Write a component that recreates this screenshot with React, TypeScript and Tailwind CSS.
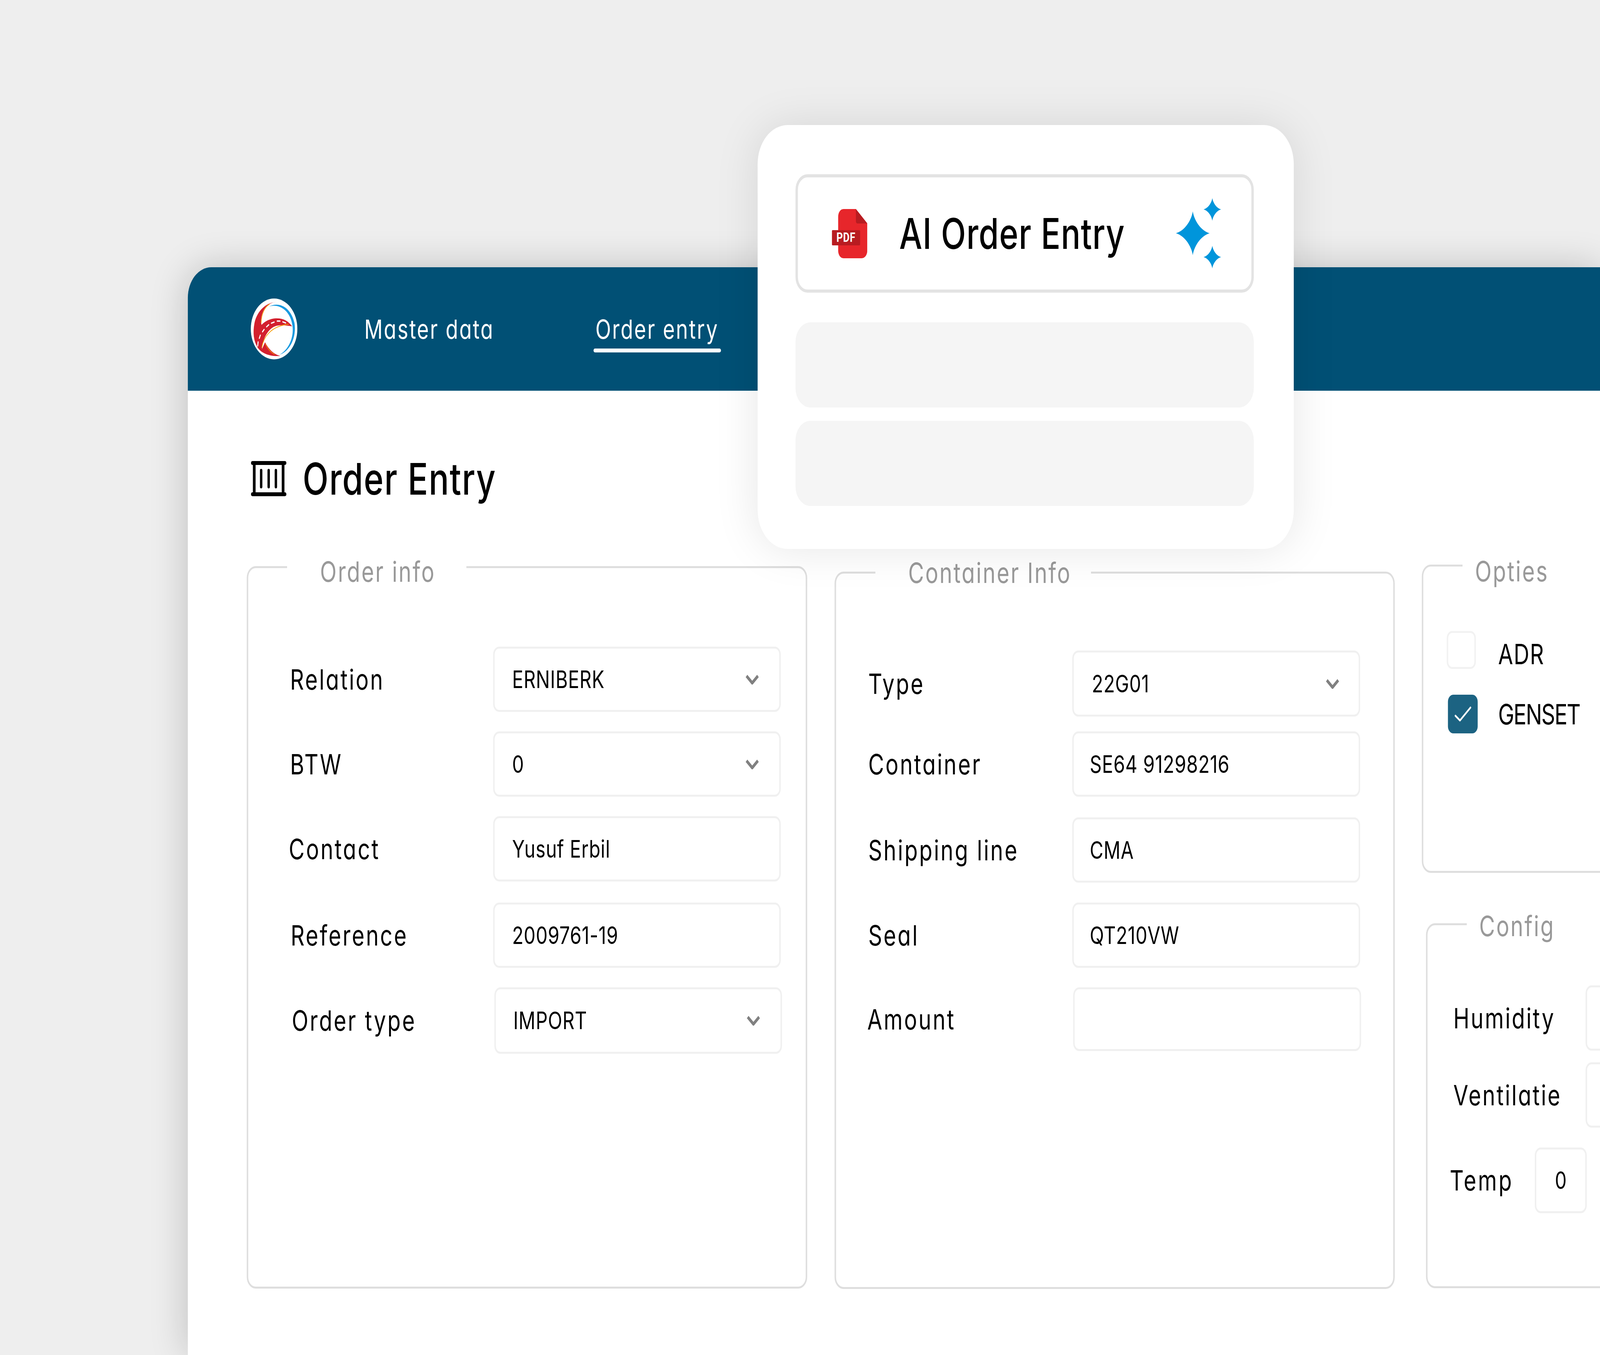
const font = "font-['Inter','Liberation_Sans',sans-serif] [font-feature-settings:'cv11']";

function Chevron() {
  return (
    <svg width="46" height="26" viewBox="0 0 46 26" fill="none" className="shrink-0">
      <path d="M4 4 L23 22 L42 4" stroke="#808080" strokeWidth="8" strokeLinejoin="round" />
    </svg>
  );
}

function Logo() {
  return (
    <svg width="156" height="156" viewBox="103 103 464 467" className="shrink-0">
      <ellipse cx="335" cy="336" rx="232" ry="233" fill="#ffffff" />
      <path
        d="M285 165 C380 125 500 165 538 290 C562 400 490 510 390 533 C480 495 535 400 518 310 C495 190 380 140 285 165 Z"
        fill="#1a9ae0"
      />
      <path
        d="M362 128 C260 135 170 190 140 290 C120 370 135 430 165 470 C200 525 300 550 397 543 C330 530 280 490 245 438 L215 490 C220 420 270 330 360 312 C410 303 470 310 515 316 C470 270 420 252 350 255 C300 257 245 275 210 305 C195 250 225 170 290 145 C315 135 340 130 362 128 Z"
        fill="#d3202e"
      />
      <path d="M206 290 C208 220 240 170 290 146" stroke="#f59a00" strokeWidth="6" fill="none" />
      <path d="M212 480 C228 400 300 315 480 300" stroke="#f59a00" strokeWidth="6" fill="none" />
      <path d="M248 450 C270 490 300 515 340 532" stroke="#f59a00" strokeWidth="5" fill="none" />
      <path
        d="M172 466 L176 436 M188 408 L198 384 M220 358 L236 340 M260 320 L282 304 M308 292 L336 284 M366 276 L394 276 M422 282 L450 290"
        stroke="#ffffff"
        strokeWidth="10"
        strokeLinecap="round"
      />
    </svg>
  );
}

function ContainerIcon() {
  return (
    <svg width="118" height="90" viewBox="0 0 118 90" fill="none" className="shrink-0">
      <path d="M5 5 H113 M5 85 H113" stroke="#000" strokeWidth="10" strokeLinecap="round" />
      <path d="M11 5 V85 M107 5 V85" stroke="#000" strokeWidth="9" />
      <path d="M34 24 V66 M59 24 V66 M83 24 V66" stroke="#000" strokeWidth="8" strokeLinecap="round" />
    </svg>
  );
}

function PdfIcon() {
  return (
    <svg width="118" height="126" viewBox="0 0 118 126" className="shrink-0">
      <path d="M39 0 H80 L118 37 V106 C118 117 110 126 99 126 H39 C28 126 21 117 21 106 V20 C21 9 28 0 39 0 Z" fill="#e7262b" />
      <path d="M80 0 L118 37 H86 C82 37 80 35 80 31 Z" fill="#b81c21" />
      <rect x="0" y="54" width="94" height="39" rx="3" fill="#b81c21" />
      <text x="47" y="84" textAnchor="middle" fill="#ffffff" fontSize="33" fontWeight="700" fontFamily="Roboto, sans-serif" letterSpacing="1">
        PDF
      </text>
    </svg>
  );
}

function Sparkles() {
  const star = (x: number, y: number, r: number) => {
    const a = r * 0.1;
    const b = r * 0.53;
    return `M${x} ${y - r} C${x + a} ${y - b} ${x + b} ${y - a} ${x + r} ${y} C${x + b} ${y + a} ${x + a} ${y + b} ${x} ${y + r} C${x - a} ${y + b} ${x - b} ${y + a} ${x - r} ${y} C${x - b} ${y - a} ${x - a} ${y - b} ${x} ${y - r} Z`;
  };
  return (
    <svg width="155" height="185" viewBox="0 0 155 185" fill="#0095db" className="shrink-0">
      <path d={star(59, 92, 56)} />
      <path d={star(124, 31, 29)} />
      <path d={star(124, 153, 29)} />
    </svg>
  );
}

type FieldProps = {
  label: string;
  value?: string;
  select?: boolean;
  row: string;
  labelClass: string;
  boxClass: string;
};

function Field({ label, value, select, row, labelClass, boxClass }: FieldProps) {
  return (
    <div className={`flex items-center ${row}`}>
      <span className={`shrink-0 text-[72px] leading-none tracking-[4.8px] text-black ${labelClass}`}>{label}</span>
      <div className={`flex items-center justify-between rounded-[20px] border-[5px] border-[#f0f0f0] bg-white ${boxClass}`}>
        <span className="text-[62px] leading-none tracking-[1px] text-black">{value}</span>
        {select && <Chevron />}
      </div>
    </div>
  );
}

function Legend({ text, className, textClass }: { text: string; className: string; textClass: string }) {
  return (
    <legend className={`h-[6px] ${className}`}>
      <span className={`block text-[72px] leading-[92px] tracking-[4.2px] whitespace-nowrap text-[#999999] ${textClass}`}>{text}</span>
    </legend>
  );
}

const orderRows = [
  { label: "Relation", value: "ERNIBERK", select: true, row: "mt-[201px]", labelClass: "w-[676px]", boxClass: "h-[167px] w-[957px] pl-[58px] pr-[67px]" },
  { label: "BTW", value: "0", select: true, row: "mt-[50px]", labelClass: "w-[676px]", boxClass: "h-[167px] w-[957px] pl-[58px] pr-[67px]" },
  { label: "Contact", value: "Yusuf Erbil", row: "mt-[50px]", labelClass: "-ml-[4px] w-[680px]", boxClass: "h-[167px] w-[957px] pl-[58px] pr-[67px]" },
  { label: "Reference", value: "2009761-19", row: "mt-[54px]", labelClass: "ml-[2px] w-[674px]", boxClass: "h-[167px] w-[957px] pl-[58px] pr-[67px]" },
  { label: "Order type", value: "IMPORT", select: true, row: "mt-[50px]", labelClass: "ml-[6px] w-[674px]", boxClass: "h-[170px] w-[957px] pl-[58px] pr-[67px]" },
];

const containerRows = [
  { label: "Type", value: "22G01", select: true, row: "mt-[197px]", labelClass: "w-[679px]", boxClass: "h-[169px] w-[958px] pl-[60px] pr-[64px]" },
  { label: "Container", value: "SE64 91298216", row: "mt-[38px]", labelClass: "w-[679px]", boxClass: "h-[167px] w-[958px] pl-[53px] pr-[64px]" },
  { label: "Shipping line", value: "CMA", row: "mt-[53px]", labelClass: "w-[679px]", boxClass: "h-[167px] w-[958px] pl-[53px] pr-[64px]" },
  { label: "Seal", value: "QT210VW", row: "mt-[51px]", labelClass: "w-[679px]", boxClass: "h-[167px] w-[958px] pl-[53px] pr-[64px]" },
  { label: "Amount", row: "mt-[50px]", labelClass: "-ml-[3px] w-[685px]", boxClass: "h-[163px] w-[958px] pl-[53px] pr-[64px]" },
];

export default function App() {
  // the page is drawn at 5324x3468 and fitted to whatever window it really gets
  const sx = window.innerWidth / 5324;
  const sy = window.innerHeight / 3468;

  return (
    <div className="h-screen w-screen overflow-hidden bg-[#eeeeee]">
      <div
        className={`relative h-[3468px] w-[5324px] origin-top-left overflow-hidden bg-[#eeeeee] pt-[684px] pl-[625px] ${font}`}
        style={{ transform: `scale(${sx}, ${sy})` }}
      >
        {/* main window runs off the right and bottom edge */}
        <div className="h-[2784px] w-[4699px] rounded-tl-[78px] bg-white shadow-[0_0_110px_rgba(0,0,0,0.2)]">
          <header className="flex h-[316px] items-center rounded-tl-[78px] bg-[#015075] pl-[209px]">
            <Logo />
            <nav className="ml-[222px] flex items-center gap-[337px] text-[68px] leading-none tracking-[3.7px] text-white">
              <span className="whitespace-nowrap">Master data</span>
              <span className="relative whitespace-nowrap">
                Order entry
                <span className="absolute -right-[8px] -bottom-[26px] -left-[6px] h-[10px] rounded-full bg-white" />
              </span>
            </nav>
          </header>

          <div className="pl-[196px]">
            <div className="flex items-center pt-[180px] pl-[14px]">
              <ContainerIcon />
              <h1 className="ml-[54px] text-[112px] leading-[90px] font-medium tracking-[2.4px] text-black">Order Entry</h1>
            </div>

            <div className="mt-[174px] flex items-start">
              <fieldset className="mt-[4px] h-[1850px] w-[1865px] shrink-0 rounded-[30px] border-[5px] border-[#dedede] pl-[139px]">
                <Legend text="Order info" className="-ml-[10px] w-[597px] pl-[110px]" textClass="-mt-[31px]" />
                {orderRows.map((r) => (
                  <Field key={r.label} {...r} />
                ))}
              </fieldset>

              <fieldset className="mt-[18px] ml-[91px] h-[1837px] w-[1864px] shrink-0 rounded-[30px] border-[5px] border-[#dedede] pl-[107px]">
                <Legend text="Container Info" className="ml-[24px] w-[717px] pl-[109px]" textClass="-mt-[42px]" />
                {containerRows.map((r) => (
                  <Field key={r.label} {...r} />
                ))}
              </fieldset>

              <div className="ml-[90px] shrink-0">
                <fieldset className="h-[790px] w-[700px] rounded-[30px] border-[5px] border-[#dedede] pl-[78px]">
                  <Legend text="Opties" className="ml-[53px] w-[600px] pl-[41px]" textClass="-mt-[28px]" />
                  <div className="mt-[165px] flex items-center gap-[74px]">
                    <span className="h-[97px] w-[97px] rounded-[18px] border-[5px] border-[#f2f2f2]" />
                    <span className="mt-[20px] text-[72px] leading-none tracking-[2px] text-black">ADR</span>
                  </div>
                  <div className="mt-[66px] ml-[4px] flex items-center gap-[68px]">
                    <span className="flex h-[99px] w-[99px] items-center justify-center rounded-[18px] bg-[#1c6382]">
                      <svg width="56" height="40" viewBox="0 0 56 40" fill="none">
                        <path d="M3 24 L18 36 L53 3" stroke="#ffffff" strokeWidth="5" strokeLinecap="round" strokeLinejoin="round" />
                      </svg>
                    </span>
                    <span className="text-[72px] leading-none tracking-[-2.5px] text-black">GENSET</span>
                  </div>
                </fieldset>

                <fieldset className="mt-[128px] ml-[14px] h-[935px] w-[700px] rounded-[30px] border-[5px] border-[#dedede] pl-[86px]">
                  <Legend text="Config" className="ml-[45px] w-[600px] pl-[41px]" textClass="-mt-[38px]" />
                  <div className="mt-[154px] flex items-center">
                    <span className="w-[440px] shrink-0 text-[72px] leading-none tracking-[4.4px] text-black">Humidity</span>
                    <span className="h-[167px] w-[300px] shrink-0 rounded-[20px] border-[5px] border-[#f0f0f0]" />
                  </div>
                  <div className="mt-[30px] flex items-center">
                    <span className="w-[440px] shrink-0 text-[72px] leading-none tracking-[4.4px] text-black">Ventilatie</span>
                    <span className="h-[167px] w-[300px] shrink-0 rounded-[20px] border-[5px] border-[#f0f0f0]" />
                  </div>
                  <div className="mt-[51px] -ml-[12px] flex items-center">
                    <span className="w-[283px] shrink-0 text-[72px] leading-none tracking-[5.5px] text-black">Temp</span>
                    <span className="flex h-[168px] w-[173px] shrink-0 items-center justify-center rounded-[20px] border-[5px] border-[#f0f0f0] text-[62px] leading-none text-black">
                      0
                    </span>
                  </div>
                </fieldset>
              </div>
            </div>
          </div>
        </div>

        {/* floating card over the header */}
        <div className="absolute top-[320px] left-[2521px] flex h-[1085px] w-[1784px] flex-col rounded-[100px] bg-white pt-[126px] pr-[133px] pl-[126px] shadow-[0_0_130px_rgba(0,0,0,0.1)]">
          <div className="flex h-[303px] items-center rounded-[40px] border-[8px] border-[#e3e3e3] pr-[99px] pl-[113px]">
            <PdfIcon />
            <span className="ml-[106px] flex-1 text-[108px] leading-none font-medium tracking-[1.5px] text-black">AI Order Entry</span>
            <Sparkles />
          </div>
          <div className="mt-[76px] h-[218px] rounded-[50px] bg-[#f5f5f5]" />
          <div className="mt-[34px] h-[218px] rounded-[50px] bg-[#f5f5f5]" />
        </div>
      </div>
    </div>
  );
}
